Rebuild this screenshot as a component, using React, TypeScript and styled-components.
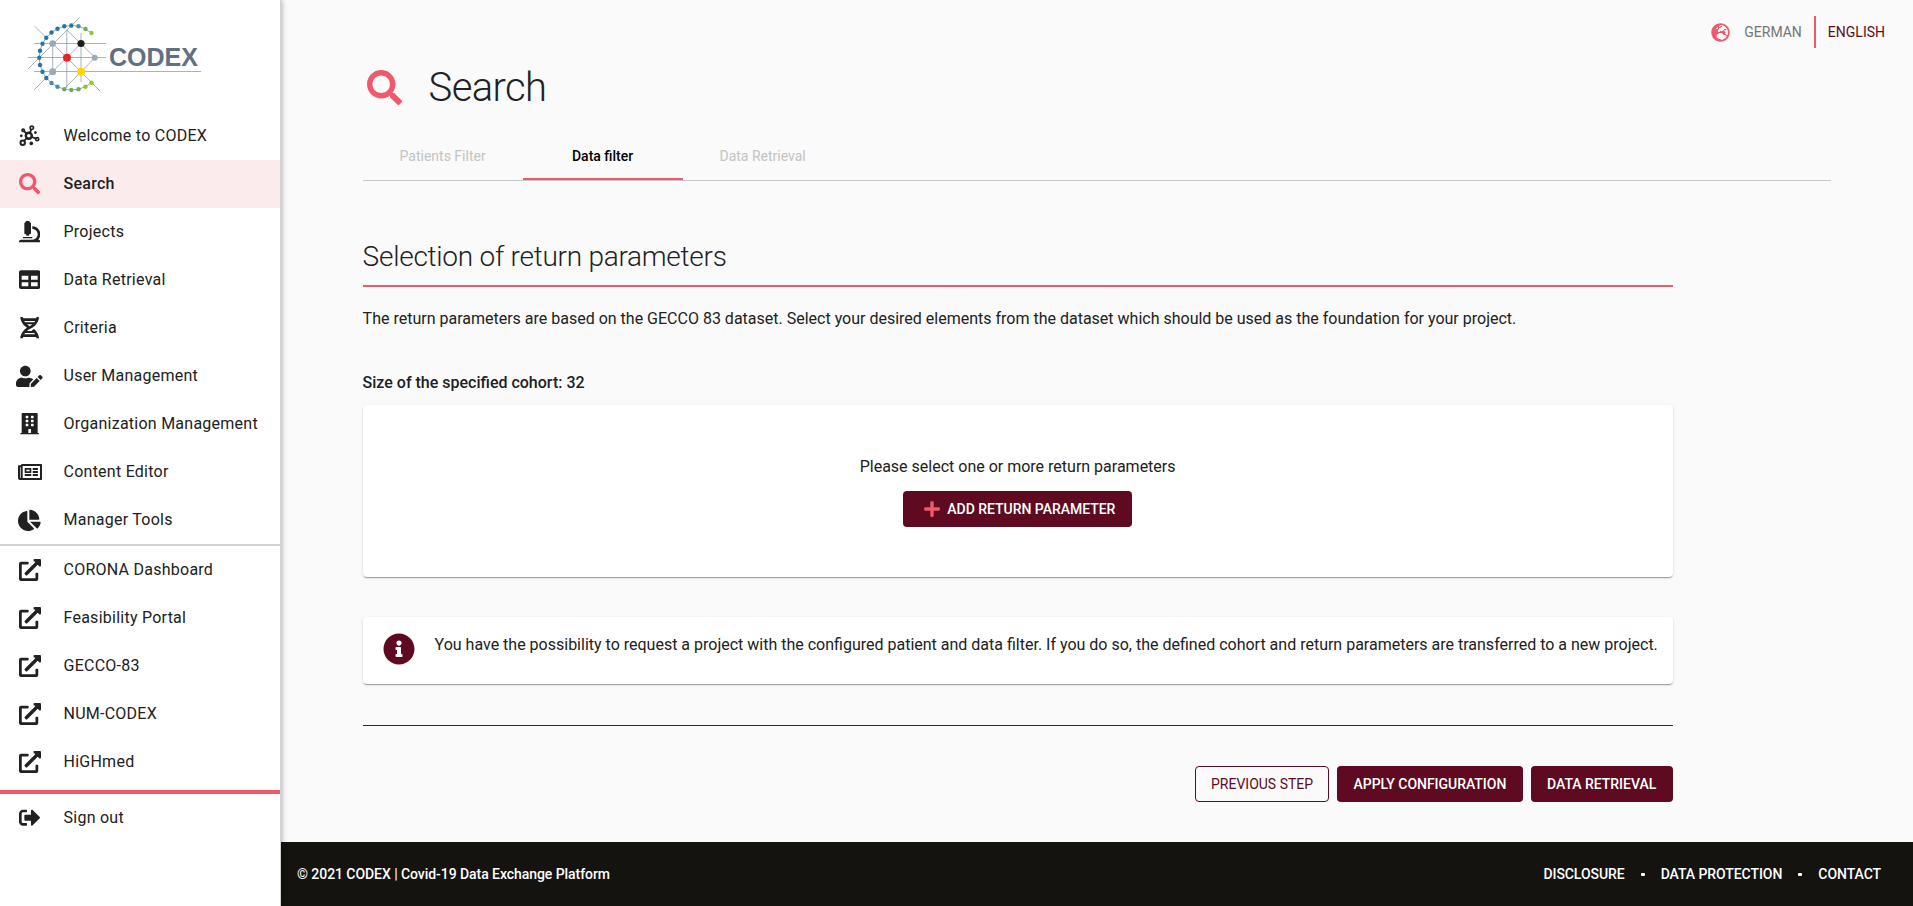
import React from 'react';
import styled, { createGlobalStyle, css } from 'styled-components';
import type { IconType } from 'react-icons';
import {
  FaSearch, FaMicroscope, FaTable, FaDna, FaUserEdit, FaBuilding, FaRegNewspaper,
  FaChartPie, FaExternalLinkAlt, FaSignOutAlt, FaPlus, FaInfoCircle, FaGlobeEurope,
} from 'react-icons/fa';

const pink = '#ee5a6c';
const wine = '#5e0b21';
const ink = '#212121';

const Global = createGlobalStyle`
  *, *::before, *::after { box-sizing: border-box; }
  body { margin: 0; background: #fafafa; color: ${ink}; font-family: Roboto, "Liberation Sans", sans-serif; font-size: 16px; }
  h1, h2, p { margin: 0; }
  svg { display: block; flex: none; }
`;

const Page = styled.div`
  display: flex;
  height: 906px;
  overflow: hidden;
`;

const Sidebar = styled.aside`
  width: 281px;
  flex: none;
  z-index: 1;
  border-right: 1px solid #d4d4d4;
  background: #fff;
  box-shadow: 1px 0 5px rgba(0, 0, 0, 0.3);
`;

const LogoBox = styled.div`
  height: 112px;
`;

const NavItem = styled.a<{ $active?: boolean }>`
  display: flex;
  align-items: center;
  height: 48px;
  letter-spacing: 0.25px;
  ${(p) => p.$active && css`
    background: #fcebed;
    font-weight: 500;
    svg { color: ${pink}; }
  `}
`;

const NavIcon = styled.span`
  display: flex;
  justify-content: center;
  width: 59px;
  margin-right: 4.5px;
`;

const NavLabel = styled.span`
  padding-bottom: 2px;
`;

const NavDivider = styled.div<{ $accent?: boolean }>`
  height: ${(p) => (p.$accent ? 4 : 2)}px;
  margin-top: ${(p) => (p.$accent ? 4 : 0)}px;
  background: ${(p) => (p.$accent ? pink : '#d3d3d3')};
`;

const Main = styled.div`
  display: flex;
  flex: 1;
  flex-direction: column;
`;

const Languages = styled.div`
  display: flex;
  align-items: center;
  justify-content: flex-end;
  height: 32px;
  margin-top: 16px;
  padding-right: 28px;
  font-size: 14px;
  svg { color: ${pink}; margin-right: 14px; }
`;

const Language = styled.span<{ $active?: boolean }>`
  padding: 0 0 0 12px;
  color: ${(p) => (p.$active ? wine : '#757575')};
  line-height: 32px;
  & + & { margin-left: 12px; border-left: 2px solid ${pink}; }
  svg + & { padding-left: 0; }
`;

const Content = styled.main`
  flex: 1;
  padding: 0 81.6px;
`;

const TitleRow = styled.div`
  display: flex;
  align-items: center;
  gap: 27px;
  height: 56px;
  margin-top: 11px;
  padding-left: 4px;
  svg { color: ${pink}; }
`;

const Title = styled.h1`
  font-size: 40px;
  font-weight: 300;
  letter-spacing: -0.65px;
`;

const Tabs = styled.div`
  display: flex;
  height: 49px;
  margin-top: 17px;
  border-bottom: 1px solid #c8c8c8;
`;

const Tab = styled.div<{ $active?: boolean }>`
  width: 160px;
  height: 48px;
  border-bottom: 2px solid ${(p) => (p.$active ? pink : 'transparent')};
  color: ${(p) => (p.$active ? '#000' : '#c3c3c3')};
  font-size: 14px;
  font-weight: ${(p) => (p.$active ? 500 : 400)};
  line-height: 49px;
  text-align: center;
`;

const Section = styled.section`
  width: 1310px;
`;

const SectionTitle = styled.h2`
  height: 55px;
  margin-top: 51px;
  border-bottom: 2px solid ${pink};
  font-size: 28px;
  font-weight: 300;
  letter-spacing: -0.26px;
  line-height: 49px;
`;

const Intro = styled.p`
  margin-top: 20px;
  line-height: 24px;
`;

const CohortSize = styled.p`
  margin-top: 40px;
  font-weight: 500;
  line-height: 24px;
`;

const Card = styled.div`
  border-radius: 4px;
  background: #fff;
  box-shadow: 0 2px 1px -1px rgba(0, 0, 0, 0.2), 0 1px 1px rgba(0, 0, 0, 0.14), 0 1px 3px rgba(0, 0, 0, 0.12);
`;

const EmptyCard = styled(Card)`
  display: flex;
  flex-direction: column;
  align-items: center;
  gap: 12px;
  height: 172px;
  margin-top: 10px;
  padding-top: 50px;
  line-height: 24px;
`;

const InfoCard = styled(Card)`
  display: flex;
  gap: 20px;
  height: 67px;
  margin-top: 40px;
  padding: 16px 16px 0 20px;
  line-height: 24px;
  white-space: nowrap;
  svg { color: ${wine}; }
`;

const Button = styled.button<{ $outline?: boolean }>`
  display: flex;
  align-items: center;
  height: 36px;
  padding: 0 ${(p) => (p.$outline ? 15 : 16.4)}px;
  border: ${(p) => (p.$outline ? `1px solid ${wine}` : '0')};
  border-radius: 4px;
  background: ${(p) => (p.$outline ? 'transparent' : wine)};
  color: ${(p) => (p.$outline ? wine : '#fff')};
  font-family: inherit;
  font-size: 14px;
  font-weight: ${(p) => (p.$outline ? 400 : 500)};
  letter-spacing: ${(p) => (p.$outline ? 0 : -0.03)}px;
  white-space: nowrap;
  svg { margin: 0 6.5px 0 3px; color: ${pink}; }
`;

const Actions = styled.div`
  display: flex;
  justify-content: flex-end;
  gap: 8px;
  margin-top: 41px;
  padding-top: 40px;
  border-top: 1px solid #2b2b2b;
`;

const Footer = styled.footer`
  display: flex;
  align-items: center;
  justify-content: space-between;
  height: 64px;
  padding: 0 32px 0 16px;
  background: #141310;
  color: #fff;
  font-size: 14px;
  font-weight: 500;
  letter-spacing: -0.06px;
`;

const FooterLinks = styled.nav`
  display: flex;
  align-items: center;
  gap: 16px;
`;

const Dot = styled.i`
  width: 4px;
  height: 3px;
  border-radius: 1px;
  background: #fff;
`;

const ring: [number, number, string][] = [
  [91.5, 33, '#95c23d'], [85.5, 29, '#74a95a'], [78.5, 26.3, '#4b8f99'], [71.3, 25.5, '#2474ae'],
  [64.3, 26.3, '#2474ae'], [57.5, 28.7, '#2474ae'], [51.5, 32.5, '#2474ae'], [46.3, 37.7, '#2474ae'],
  [42.5, 43.7, '#2474ae'], [40, 50.7, '#2474ae'], [39.3, 57.8, '#2474ae'], [40, 65, '#2474ae'],
  [42.5, 71.8, '#2474ae'], [46.3, 78, '#2474ae'], [51.5, 83, '#4b8f99'], [57.5, 86.7, '#4b8f99'],
  [64.3, 89.2, '#74a95a'], [71.3, 90, '#74a95a'], [78.5, 89.2, '#74a95a'], [85.5, 86.7, '#95c23d'], [91.5, 82.7, '#95c23d'],
];

const Logo = () => (
  <svg width="220" height="112" viewBox="0 0 220 112">
    <g stroke="#8b99a5" strokeWidth="0.75" fill="none">
      <path d="M34 43.5H106M28 57.5H106M34 71.5H201" />
      <path d="M52.7 43.5V72M66.8 30V88M81 33V82" />
      <path d="M34.5 26L46.3 37.7M52.7 43.5L100 91M28 69L79.5 17.5M34 90L81 43.5M64 89L95 57.5M66.8 30L95 57.5" />
      <polyline points={ring.map(([x, y]) => `${x},${y}`).join(' ')} stroke="#5d8fae" />
    </g>
    {ring.map(([x, y, c]) => <circle key={`${x}-${y}`} cx={x} cy={y} r="2.2" fill={c} />)}
    <circle cx="52.7" cy="43.5" r="3.3" fill="#9ba9b6" />
    <circle cx="52.7" cy="71.8" r="3.5" fill="#9ba9b6" />
    <circle cx="94.7" cy="57.7" r="3" fill="#9ba9b6" />
    <circle cx="81" cy="43.5" r="3.6" fill="#1d1d1b" />
    <circle cx="67" cy="57.8" r="4" fill="#e52329" />
    <circle cx="81" cy="71.8" r="4" fill="#ffd500" />
    <text x="109" y="66" textLength="89" lengthAdjust="spacingAndGlyphs" fill="#607080" fontFamily="Liberation Sans, sans-serif" fontWeight="700" fontSize="25.5">CODEX</text>
  </svg>
);

const NetworkIcon = () => (
  <svg width="21" height="22" viewBox="0 0 21 22" fill="none" stroke="currentColor">
    <circle cx="9.8" cy="10.8" r="3" strokeWidth="2.4" />
    <circle cx="12.8" cy="2.8" r="1.7" strokeWidth="1.7" />
    <circle cx="4.2" cy="5.2" r="1.2" strokeWidth="1.7" />
    <circle cx="3.7" cy="17.7" r="2.2" strokeWidth="2" />
    <circle cx="18.2" cy="14.2" r="1.5" strokeWidth="1.7" />
    <path d="M12.1 4.4L11 8M5.2 6.3L7.5 8.5M5 16L7.4 13.4M16.8 13.6L13 12" strokeWidth="1.8" />
    <g fill="currentColor" stroke="none">
      <circle cx="16.4" cy="7.6" r="1.4" /><circle cx="2.3" cy="10.8" r="1.4" /><circle cx="12.3" cy="18.4" r="1.8" />
    </g>
  </svg>
);

type Entry = { label: string; icon: IconType; active?: boolean; size?: number };

const appLinks: Entry[] = [
  { label: 'Search', icon: FaSearch, active: true },
  { label: 'Projects', icon: FaMicroscope },
  { label: 'Data Retrieval', icon: FaTable },
  { label: 'Criteria', icon: FaDna },
  { label: 'User Management', icon: FaUserEdit, size: 26.67 },
  { label: 'Organization Management', icon: FaBuilding },
  { label: 'Content Editor', icon: FaRegNewspaper, size: 24 },
  { label: 'Manager Tools', icon: FaChartPie, size: 22.67 },
];

const externalLinks = ['CORONA Dashboard', 'Feasibility Portal', 'GECCO-83', 'NUM-CODEX', 'HiGHmed'];

const NavEntry = ({ label, icon: Icon, active, size = 21.33 }: Entry) => (
  <NavItem $active={active}>
    <NavIcon><Icon size={size} /></NavIcon>
    <NavLabel>{label}</NavLabel>
  </NavItem>
);

export default function App() {
  return (
    <>
      <Global />
      <Page>
        <Sidebar>
          <LogoBox><Logo /></LogoBox>
          <NavItem><NavIcon><NetworkIcon /></NavIcon><NavLabel>Welcome to CODEX</NavLabel></NavItem>
          {appLinks.map((e) => <NavEntry key={e.label} {...e} />)}
          <NavDivider />
          {externalLinks.map((l) => <NavEntry key={l} label={l} icon={FaExternalLinkAlt} size={22} />)}
          <NavDivider $accent />
          <NavEntry label="Sign out" icon={FaSignOutAlt} />
        </Sidebar>
        <Main>
          <Languages>
            <FaGlobeEurope size={19} />
            <Language>GERMAN</Language>
            <Language $active>ENGLISH</Language>
          </Languages>
          <Content>
            <TitleRow><FaSearch size={35} /><Title>Search</Title></TitleRow>
            <Tabs>
              <Tab>Patients Filter</Tab>
              <Tab $active>Data filter</Tab>
              <Tab>Data Retrieval</Tab>
            </Tabs>
            <Section>
              <SectionTitle>Selection of return parameters</SectionTitle>
              <Intro>The return parameters are based on the GECCO 83 dataset. Select your desired elements from the dataset which should be used as the foundation for your project.</Intro>
              <CohortSize>Size of the specified cohort: 32</CohortSize>
              <EmptyCard>
                <p>Please select one or more return parameters</p>
                <Button><FaPlus size={18} />ADD RETURN PARAMETER</Button>
              </EmptyCard>
              <InfoCard>
                <FaInfoCircle size={32} />
                <p>You have the possibility to request a project with the configured patient and data filter. If you do so, the defined cohort and return parameters are transferred to a new project.</p>
              </InfoCard>
              <Actions>
                <Button $outline>PREVIOUS STEP</Button>
                <Button>APPLY CONFIGURATION</Button>
                <Button>DATA RETRIEVAL</Button>
              </Actions>
            </Section>
          </Content>
          <Footer>
            <span>© 2021 CODEX | Covid-19 Data Exchange Platform</span>
            <FooterLinks>
              <span>DISCLOSURE</span><Dot /><span>DATA PROTECTION</span><Dot /><span>CONTACT</span>
            </FooterLinks>
          </Footer>
        </Main>
      </Page>
    </>
  );
}
